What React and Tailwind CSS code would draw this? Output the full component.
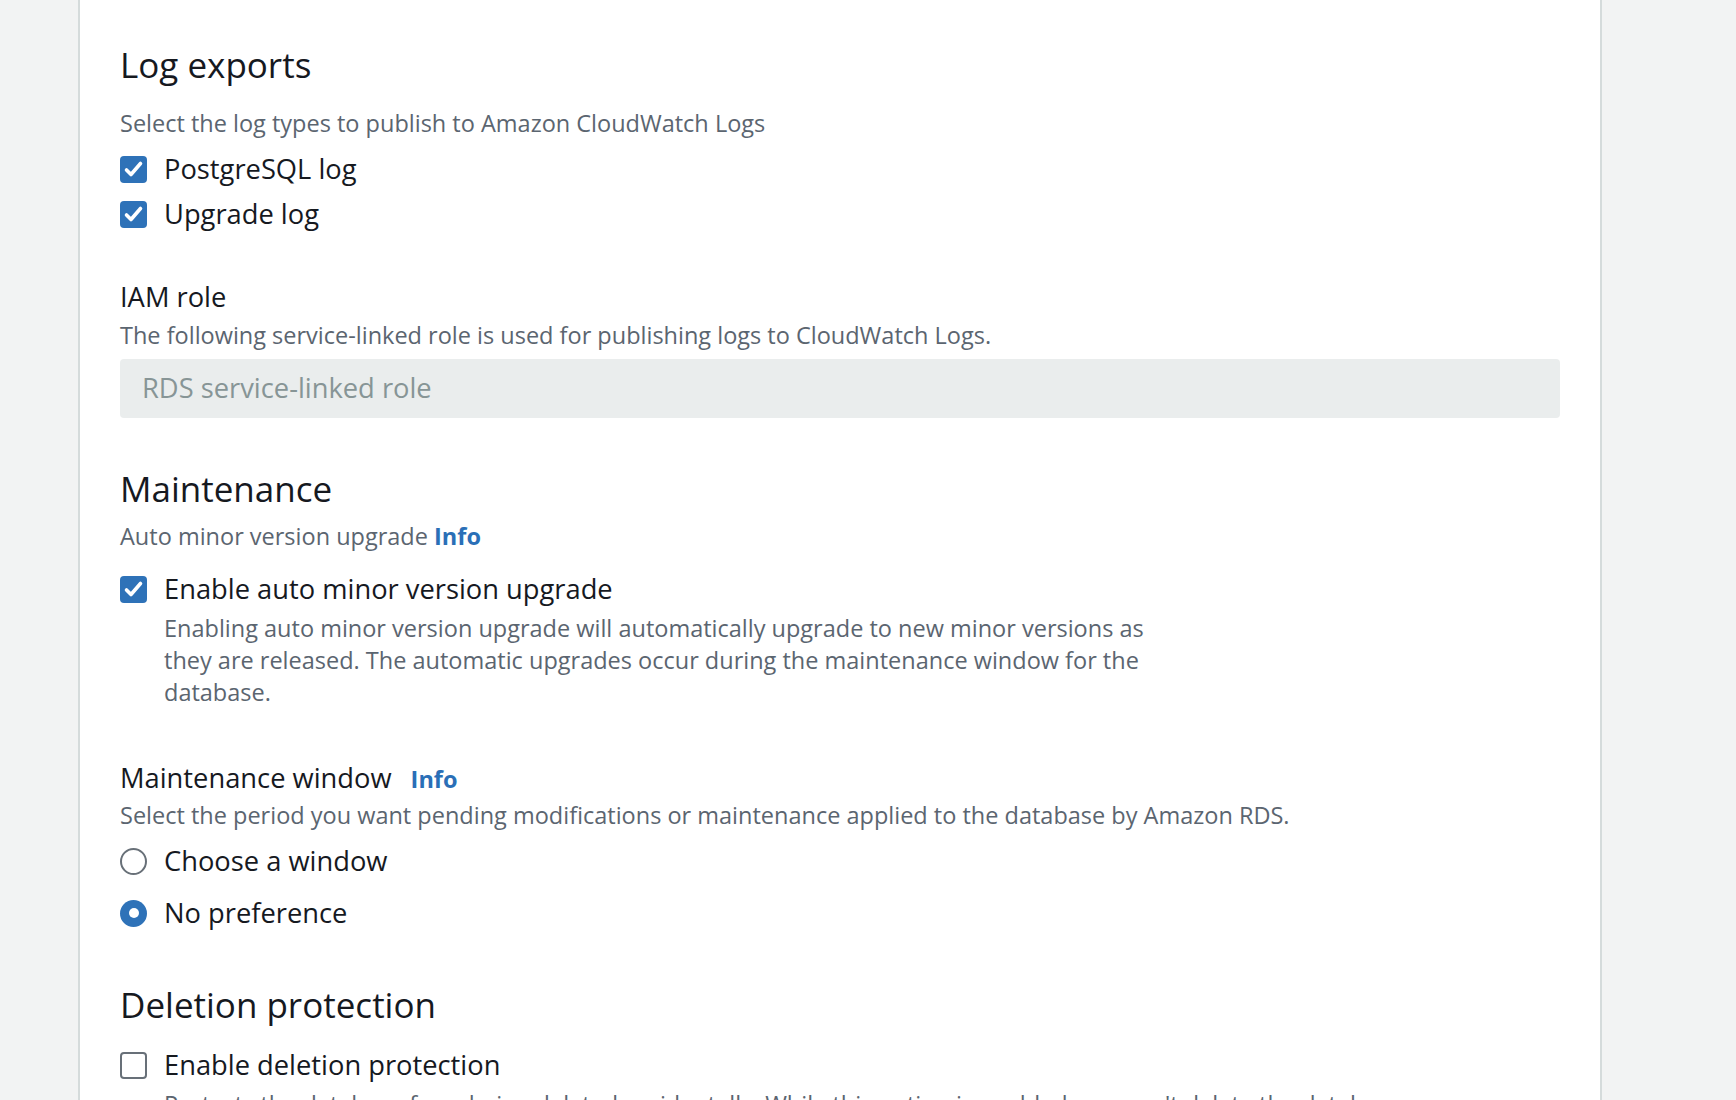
import React from "react";

const font = { fontFamily: "'Open Sans', 'Noto Sans', sans-serif" };

function Checkbox({ checked }) {
  if (checked) {
    return (
      <span className="flex h-[27px] w-[27px] shrink-0 items-center justify-center rounded-[4px] bg-[#2e72b8]">
        <svg width="27" height="27" viewBox="0 0 27 27" fill="none">
          <path d="M6.5 14 L11 18.5 L20.5 7.5" stroke="white" strokeWidth="3.6" strokeLinecap="round" strokeLinejoin="round" />
        </svg>
      </span>
    );
  }
  return <span className="h-[27px] w-[27px] shrink-0 rounded-[4px] border-[2.5px] border-[#687078] bg-white" />;
}

function Radio({ checked }) {
  if (checked) {
    return (
      <span className="flex h-[27px] w-[27px] shrink-0 items-center justify-center rounded-full bg-[#2e72b8]">
        <span className="h-[10px] w-[10px] rounded-full bg-white" />
      </span>
    );
  }
  return <span className="h-[27px] w-[27px] shrink-0 rounded-full border-[2.5px] border-[#687078] bg-white" />;
}

function OptionRow({ control, label }) {
  return (
    <div className="flex h-[40px] items-center gap-[17px]">
      {control}
      <span className="whitespace-nowrap text-[27.3px] leading-[40px] text-[#16191f]">{label}</span>
    </div>
  );
}

export default function App() {
  return (
    <div className="flex min-h-[1100px] w-full bg-[#f2f3f3]" style={font}>
      <div className="ml-[78px] w-[1524px] shrink-0 border-x-2 border-[#d5dbdb] bg-white px-[40px] pt-[43px]">
        {/* Log exports */}
        <h2 className="text-[35px] leading-[44px] font-normal text-[#16191f]">Log exports</h2>
        <p className="mt-[20px] text-[23.5px] leading-[32px] text-[#5b6570]">
          Select the log types to publish to Amazon CloudWatch Logs
        </p>
        <div className="mt-[10px] flex flex-col gap-[5px]">
          <OptionRow control={<Checkbox checked />} label="PostgreSQL log" />
          <OptionRow control={<Checkbox checked />} label="Upgrade log" />
        </div>

        {/* IAM role */}
        <div className="mt-[46px] text-[27.3px] leading-[34px] text-[#16191f]">IAM role</div>
        <p className="mt-[5px] text-[23.5px] leading-[32px] text-[#5b6570]">
          The following service-linked role is used for publishing logs to CloudWatch Logs.
        </p>
        <div className="mt-[8px] flex h-[59px] items-center rounded-[4px] bg-[#eaeded] px-[22px] text-[27.3px] text-[#879596]">
          RDS service-linked role
        </div>

        {/* Maintenance */}
        <h2 className="mt-[49px] text-[35px] leading-[44px] font-normal text-[#16191f]">Maintenance</h2>
        <p className="mt-[9px] text-[23.5px] leading-[32px] text-[#5b6570]">
          Auto minor version upgrade <a className="font-bold text-[#2a6fb7]">Info</a>
        </p>
        <div className="mt-[17px]">
          <OptionRow control={<Checkbox checked />} label="Enable auto minor version upgrade" />
          <p className="mt-[3px] whitespace-nowrap pl-[44px] text-[23.5px] leading-[32px] text-[#5b6570]">
            Enabling auto minor version upgrade will automatically upgrade to new minor versions as
            <br />
            they are released. The automatic upgrades occur during the maintenance window for the
            <br />
            database.
          </p>
        </div>

        <div className="mt-[53px] flex items-baseline gap-[19px]">
          <span className="text-[27.3px] leading-[34px] text-[#16191f]">Maintenance window</span>
          <a className="text-[23.5px] font-bold leading-[34px] text-[#2a6fb7]">Info</a>
        </div>
        <p className="mt-[3px] text-[23.5px] leading-[32px] text-[#5b6570]">
          Select the period you want pending modifications or maintenance applied to the database by Amazon RDS.
        </p>
        <div className="mt-[10px] flex flex-col gap-[12px]">
          <OptionRow control={<Radio />} label="Choose a window" />
          <OptionRow control={<Radio checked />} label="No preference" />
        </div>

        {/* Deletion protection */}
        <h2 className="mt-[50px] text-[35px] leading-[44px] font-normal text-[#16191f]">Deletion protection</h2>
        <div className="mt-[18px]">
          <OptionRow control={<Checkbox />} label="Enable deletion protection" />
          <p className="mt-[3px] whitespace-nowrap pl-[44px] text-[23.5px] leading-[32px] text-[#5b6570]">
            Protects the database from being deleted accidentally. While this option is enabled, you can't delete the database.
          </p>
        </div>
      </div>
    </div>
  );
}
